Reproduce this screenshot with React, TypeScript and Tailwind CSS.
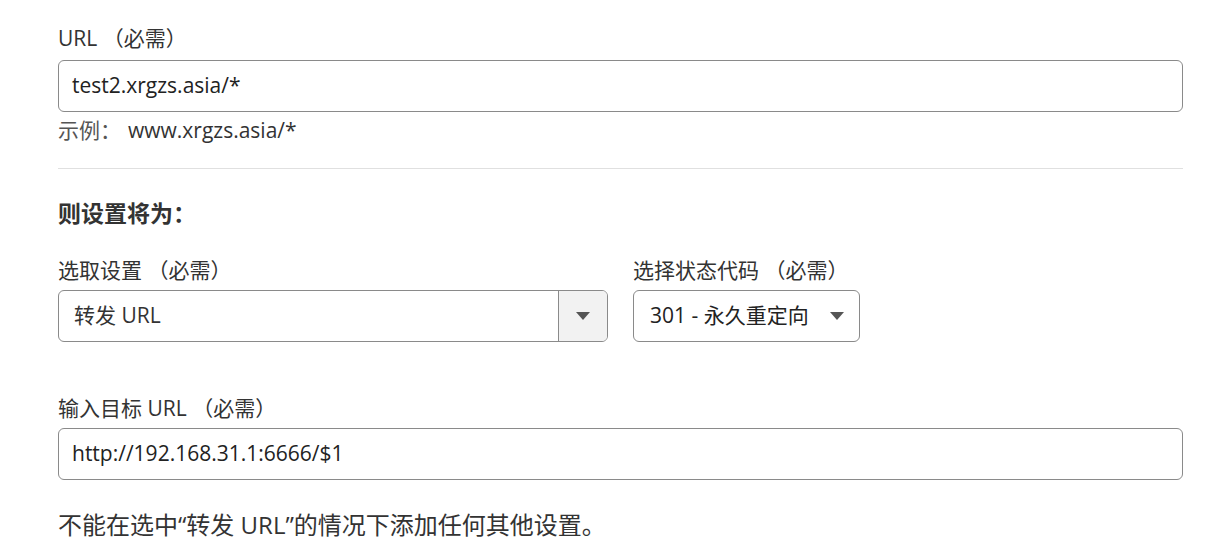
import React from "react";

const font = { fontFamily: '"Open Sans", "Noto Sans CJK SC", sans-serif' };

function Caret() {
  return (
    <svg width="14" height="8" viewBox="0 0 14 8" className="block">
      <path d="M0 0 L14 0 L7 8 Z" fill="#555" />
    </svg>
  );
}

export default function App() {
  return (
    <div className="w-[1229px] h-[557px] bg-white overflow-hidden text-[#333]" style={font}>
      <div className="pl-[58px] pr-[46px] pt-[24px]">
        <div className="text-[21px] leading-[28px] mb-[8px]">URL （必需）</div>
        <div className="h-[52px] border border-[#8a8a8a] rounded-[6px] flex items-center pl-[13px] text-[21px] text-[#222]">
          test2.xrgzs.asia/*
        </div>
        <div className="mt-[6px] text-[21px] leading-[24px] flex gap-[7px]">
          <span className="text-[#555]">示例：</span>
          <span className="text-[#333]">www.xrgzs.asia/*</span>
        </div>
        <div className="mt-[26px] h-px bg-[#e0e0e0]" />
        <div className="mt-[30px] text-[23px] leading-[28px] font-bold text-[#333]">则设置将为：</div>
        <div className="mt-[29px] flex gap-[25px]">
          <div className="w-[550px]">
            <div className="text-[21px] leading-[28px] mb-[6px]">选取设置 （必需）</div>
            <div className="h-[52px] border border-[#8a8a8a] rounded-[6px] flex overflow-hidden">
              <div className="flex-1 flex items-center pl-[15px] text-[21px] text-[#333]">转发 URL</div>
              <div className="w-[49px] border-l border-[#8a8a8a] bg-[#f2f2f2] flex items-center justify-center">
                <Caret />
              </div>
            </div>
          </div>
          <div className="w-[227px]">
            <div className="text-[21px] leading-[28px] mb-[6px]">选择状态代码 （必需）</div>
            <div className="h-[52px] border border-[#8a8a8a] rounded-[6px] flex items-center justify-between pl-[16px] pr-[15px] text-[21px] text-[#222]">
              <span>301 - 永久重定向</span>
              <Caret />
            </div>
          </div>
        </div>
        <div className="mt-[52px] text-[21px] leading-[28px] mb-[6px]">输入目标 URL （必需）</div>
        <div className="h-[52px] border border-[#8a8a8a] rounded-[6px] flex items-center pl-[13px] text-[21px] text-[#222]">
          http://192.168.31.1:6666/$1
        </div>
        <div className="mt-[30px] text-[24px] leading-[30px] text-[#333]">不能在选中“转发 URL”的情况下添加任何其他设置。</div>
      </div>
    </div>
  );
}
